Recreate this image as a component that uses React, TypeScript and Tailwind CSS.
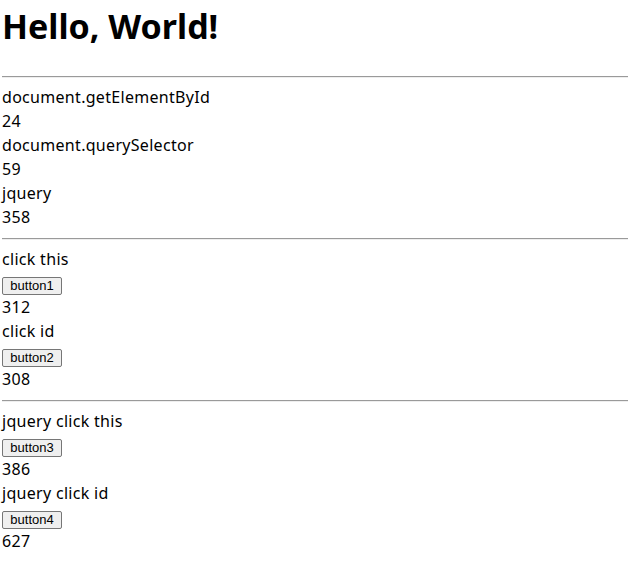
import React from "react";

const Line = ({ children }: { children: React.ReactNode }) => (
  <div className="h-6 leading-[22px] text-[16px] tracking-[0.3px] text-black">{children}</div>
);

const Btn = ({ label }: { label: string }) => (
  <div className="h-6 flex items-start pt-[5px]">
    <button
      className="h-[18px] w-[60px] flex items-center justify-center rounded-[2px] border border-[#767676] bg-[#efefef] text-[13px] text-black"
      style={{ fontFamily: '"Liberation Sans", Arial, sans-serif' }}
    >
      {label}
    </button>
  </div>
);

const Hr = () => (
  <div className="my-2 h-[2px] border-t border-b border-t-[#9a9a9a] border-b-[#eeeeee]" />
);

export default function App() {
  return (
    <div
      className="min-h-[567px] bg-white pl-[2px] pt-0"
      style={{ fontFamily: '"Noto Sans", "Noto Sans CJK JP", sans-serif' }}
    >
      <h1 className="h-[68px] pt-[2px] text-[34px] font-bold leading-[48px] text-black">
        Hello, World!
      </h1>
      <Hr />
      <Line>document.getElementById</Line>
      <Line>24</Line>
      <Line>document.querySelector</Line>
      <Line>59</Line>
      <Line>jquery</Line>
      <Line>358</Line>
      <Hr />
      <Line>click this</Line>
      <Btn label="button1" />
      <Line>312</Line>
      <Line>click id</Line>
      <Btn label="button2" />
      <Line>308</Line>
      <Hr />
      <Line>jquery click this</Line>
      <Btn label="button3" />
      <Line>386</Line>
      <Line>jquery click id</Line>
      <Btn label="button4" />
      <Line>627</Line>
    </div>
  );
}
